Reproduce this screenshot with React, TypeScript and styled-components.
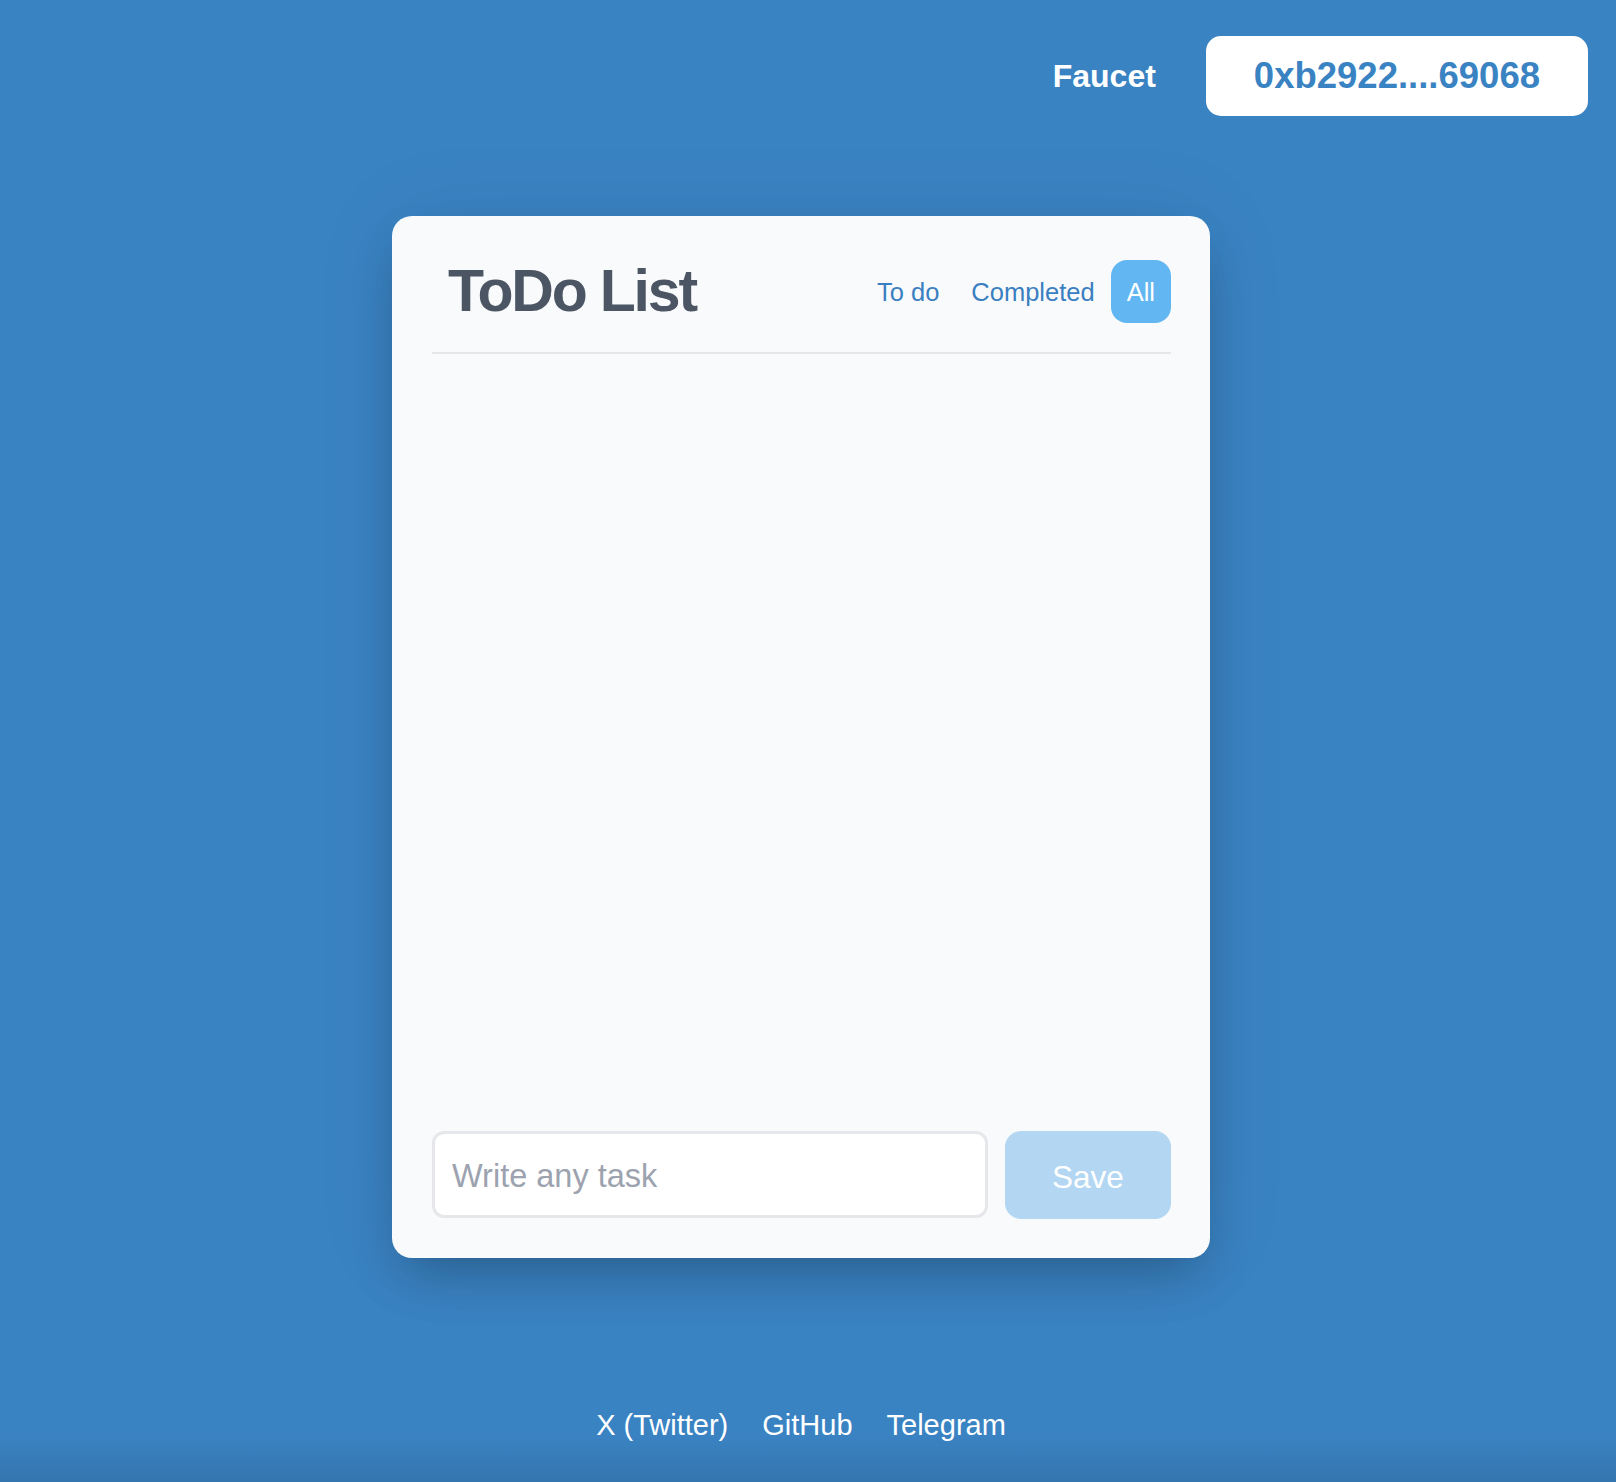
import React from "react";
import styled, { createGlobalStyle } from "styled-components";

const GlobalStyle = createGlobalStyle`
  html, body {
    margin: 0;
    padding: 0;
    background: #3a83c3;
  }
  body {
    font-family: "Liberation Sans", Arial, Helvetica, sans-serif;
  }
  * { box-sizing: border-box; }
`;

const Page = styled.div`
  min-height: 1482px;
  width: 100%;
  display: flex;
  flex-direction: column;
  background: #3a83c3;
  overflow: hidden;
`;

const TopBar = styled.header`
  display: flex;
  justify-content: flex-end;
  align-items: center;
  gap: 50px;
  padding: 36px 28px 0 0;
`;

const FaucetLink = styled.a`
  color: #ffffff;
  font-weight: 700;
  font-size: 32px;
  text-decoration: none;
  cursor: pointer;
`;

const WalletButton = styled.button`
  height: 80px;
  padding: 0 48px;
  border: none;
  border-radius: 15px;
  background: #ffffff;
  color: #3a83c3;
  font-family: inherit;
  font-weight: 700;
  font-size: 36.5px;
  cursor: pointer;
`;

const Main = styled.main`
  display: flex;
  justify-content: center;
  padding: 100px 14px 0 0;
`;

const Card = styled.section`
  width: 818px;
  height: 1042px;
  padding: 44px 39px 39px 40px;
  border-radius: 20px;
  background: #f9fafb;
  display: flex;
  flex-direction: column;
  box-shadow: 0 25px 50px -12px rgba(0, 0, 0, 0.25), 0 0 90px rgba(0, 0, 0, 0.07);
`;

const CardHeader = styled.div`
  display: flex;
  align-items: center;
  justify-content: space-between;
  padding-bottom: 29px;
  border-bottom: 2px solid #e5e7eb;
`;

const Title = styled.h1`
  margin: 0;
  padding-left: 16px;
  font-size: 59px;
  line-height: 1;
  font-weight: 700;
  letter-spacing: -2.2px;
  color: #4b5563;
`;

const Tabs = styled.nav`
  display: flex;
  align-items: center;
`;

const Tab = styled.button<{ $active?: boolean }>`
  height: 63px;
  padding: 2px 16px 0;
  border: none;
  border-radius: 16px;
  font-family: inherit;
  font-size: 25.5px;
  cursor: pointer;
  background: ${(p) => (p.$active ? "#62b6f1" : "transparent")};
  color: ${(p) => (p.$active ? "#ffffff" : "#3a7fc1")};
`;

const ListArea = styled.div`
  flex: 1;
`;

const Form = styled.form`
  display: flex;
  gap: 17px;
  height: 88px;
`;

const TaskInput = styled.input`
  flex: 1;
  height: 87px;
  padding: 4px 17px 0;
  border: 3px solid #e5e7eb;
  border-radius: 12px;
  background: #ffffff;
  font-family: inherit;
  font-size: 32.5px;
  color: #374151;
  outline: none;
  &::placeholder {
    color: #9ca3af;
  }
`;

const SaveButton = styled.button`
  width: 166px;
  height: 88px;
  padding: 4px 0 0;
  border: none;
  border-radius: 16px;
  background: #b3d7f2;
  color: #ffffff;
  font-family: inherit;
  font-size: 31.5px;
  cursor: default;
`;

const Footer = styled.footer`
  flex: 1;
  display: flex;
  justify-content: center;
  align-items: flex-start;
  gap: 34px;
  padding: 150px 14px 0 0;
  background: linear-gradient(
    to bottom,
    rgba(0, 0, 0, 0) 0%,
    rgba(0, 0, 0, 0) 78%,
    rgba(0, 0, 0, 0.1) 100%
  );
`;

const FooterLink = styled.a`
  color: #ffffff;
  font-size: 29px;
  line-height: 1.2;
  text-decoration: none;
  cursor: pointer;
`;

export default function App() {
  return (
    <>
      <GlobalStyle />
      <Page>
        <TopBar>
          <FaucetLink>Faucet</FaucetLink>
          <WalletButton>0xb2922....69068</WalletButton>
        </TopBar>
        <Main>
          <Card>
            <CardHeader>
              <Title>ToDo List</Title>
              <Tabs>
                <Tab>To do</Tab>
                <Tab>Completed</Tab>
                <Tab $active>All</Tab>
              </Tabs>
            </CardHeader>
            <ListArea />
            <Form onSubmit={(e) => e.preventDefault()}>
              <TaskInput placeholder="Write any task" />
              <SaveButton type="submit">Save</SaveButton>
            </Form>
          </Card>
        </Main>
        <Footer>
          <FooterLink>X (Twitter)</FooterLink>
          <FooterLink>GitHub</FooterLink>
          <FooterLink>Telegram</FooterLink>
        </Footer>
      </Page>
    </>
  );
}
